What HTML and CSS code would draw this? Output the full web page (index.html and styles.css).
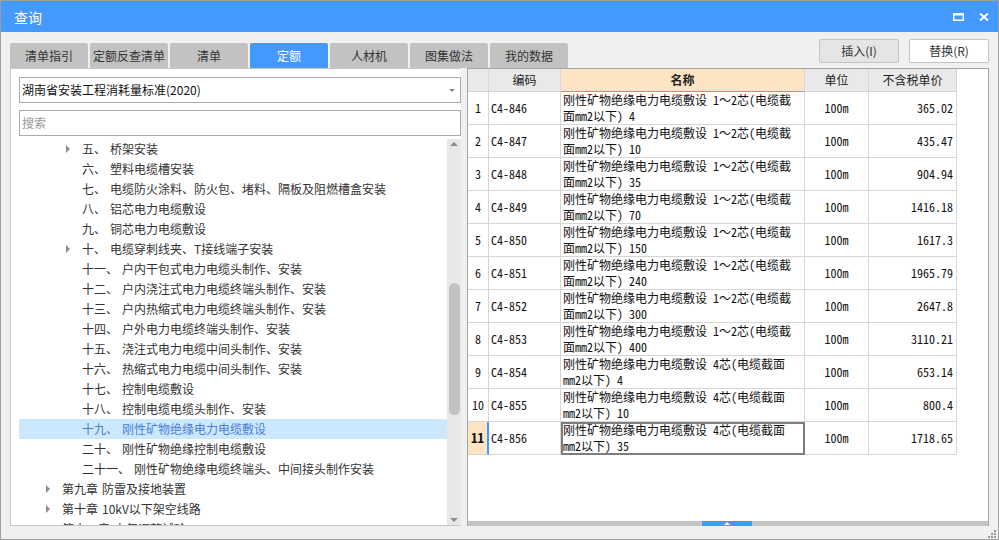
FILE: index.html
```html
<!DOCTYPE html>
<html lang="zh-CN">
<head>
<meta charset="utf-8">
<title>查询</title>
<link rel="stylesheet" href="styles.css">
</head>
<body>
<div class="window">
  <div class="titlebar">
    <span class="title">查询</span>
    <div class="win-ctrls">
      <svg class="ico" width="11" height="8" viewBox="0 0 11 8"><rect x="0.75" y="0.75" width="9.5" height="6.5" fill="none" stroke="#fff" stroke-width="1.5"/><rect x="0" y="0" width="11" height="2.5" fill="#fff"/></svg>
      <svg class="ico" width="10" height="8" viewBox="0 0 10 8"><path d="M1 0.5 L9 7.5 M9 0.5 L1 7.5" stroke="#fff" stroke-width="2" fill="none"/></svg>
    </div>
  </div>

  <div class="toolbar">
    <div class="tabs">
      <div class="tab">清单指引</div>
      <div class="tab">定额反查清单</div>
      <div class="tab">清单</div>
      <div class="tab active">定额</div>
      <div class="tab">人材机</div>
      <div class="tab">图集做法</div>
      <div class="tab">我的数据</div>
    </div>
    <div class="actions">
      <button class="btn gray">插入(I)</button>
      <button class="btn">替换(R)</button>
    </div>
  </div>

  <div class="content">
    <div class="left">
      <div class="select"><span>湖南省安装工程消耗量标准(2020)</span><span class="caret"></span></div>
      <div class="search">搜索</div>
      <div class="tree-wrap">
        <ul class="tree">
          <li class="l2"><span class="arrow"></span><span class="num">五、</span><span class="txt">桥架安装</span></li>
          <li class="l2"><span class="arrow none"></span><span class="num">六、</span><span class="txt">塑料电缆槽安装</span></li>
          <li class="l2"><span class="arrow none"></span><span class="num">七、</span><span class="txt">电缆防火涂料、防火包、堵料、隔板及阻燃槽盒安装</span></li>
          <li class="l2"><span class="arrow none"></span><span class="num">八、</span><span class="txt">铝芯电力电缆敷设</span></li>
          <li class="l2"><span class="arrow none"></span><span class="num">九、</span><span class="txt">铜芯电力电缆敷设</span></li>
          <li class="l2"><span class="arrow"></span><span class="num">十、</span><span class="txt">电缆穿刺线夹、T接线端子安装</span></li>
          <li class="l2"><span class="arrow none"></span><span class="num">十一、</span><span class="txt">户内干包式电力电缆头制作、安装</span></li>
          <li class="l2"><span class="arrow none"></span><span class="num">十二、</span><span class="txt">户内浇注式电力电缆终端头制作、安装</span></li>
          <li class="l2"><span class="arrow none"></span><span class="num">十三、</span><span class="txt">户内热缩式电力电缆终端头制作、安装</span></li>
          <li class="l2"><span class="arrow none"></span><span class="num">十四、</span><span class="txt">户外电力电缆终端头制作、安装</span></li>
          <li class="l2"><span class="arrow none"></span><span class="num">十五、</span><span class="txt">浇注式电力电缆中间头制作、安装</span></li>
          <li class="l2"><span class="arrow none"></span><span class="num">十六、</span><span class="txt">热缩式电力电缆中间头制作、安装</span></li>
          <li class="l2"><span class="arrow none"></span><span class="num">十七、</span><span class="txt">控制电缆敷设</span></li>
          <li class="l2"><span class="arrow none"></span><span class="num">十八、</span><span class="txt">控制电缆电缆头制作、安装</span></li>
          <li class="l2 selected"><span class="arrow none"></span><span class="num">十九、</span><span class="txt">刚性矿物绝缘电力电缆敷设</span></li>
          <li class="l2"><span class="arrow none"></span><span class="num">二十、</span><span class="txt">刚性矿物绝缘控制电缆敷设</span></li>
          <li class="l2"><span class="arrow none"></span><span class="num">二十一、</span><span class="txt">刚性矿物绝缘电缆终端头、中间接头制作安装</span></li>
          <li class="l1"><span class="arrow"></span><span class="num">第九章</span><span class="txt">防雷及接地装置</span></li>
          <li class="l1"><span class="arrow"></span><span class="num">第十章</span><span class="txt">10kV以下架空线路</span></li>
          <li class="l1"><span class="arrow"></span><span class="num">第十一章</span><span class="txt">电气调整试验</span></li>
        </ul>
        <div class="vscroll">
          <span class="sb-up"></span>
          <div class="sb-thumb"></div>
          <span class="sb-down"></span>
        </div>
      </div>
    </div>

    <div class="right">
      <div class="grid">
        <div class="row head">
          <div></div>
          <div class="c">编码</div>
          <div class="c sel-col">名称</div>
          <div class="c">单位</div>
          <div class="c">不含税单价</div>
        </div>
        <div class="row"><div class="rn">1</div><div class="code">C4-846</div><div class="name">刚性矿物绝缘电力电缆敷设 1～2芯(电缆截<br>面mm2以下) 4</div><div class="unit">100m</div><div class="price">365.02</div></div>
        <div class="row"><div class="rn">2</div><div class="code">C4-847</div><div class="name">刚性矿物绝缘电力电缆敷设 1～2芯(电缆截<br>面mm2以下) 10</div><div class="unit">100m</div><div class="price">435.47</div></div>
        <div class="row"><div class="rn">3</div><div class="code">C4-848</div><div class="name">刚性矿物绝缘电力电缆敷设 1～2芯(电缆截<br>面mm2以下) 35</div><div class="unit">100m</div><div class="price">904.94</div></div>
        <div class="row"><div class="rn">4</div><div class="code">C4-849</div><div class="name">刚性矿物绝缘电力电缆敷设 1～2芯(电缆截<br>面mm2以下) 70</div><div class="unit">100m</div><div class="price">1416.18</div></div>
        <div class="row"><div class="rn">5</div><div class="code">C4-850</div><div class="name">刚性矿物绝缘电力电缆敷设 1～2芯(电缆截<br>面mm2以下) 150</div><div class="unit">100m</div><div class="price">1617.3</div></div>
        <div class="row"><div class="rn">6</div><div class="code">C4-851</div><div class="name">刚性矿物绝缘电力电缆敷设 1～2芯(电缆截<br>面mm2以下) 240</div><div class="unit">100m</div><div class="price">1965.79</div></div>
        <div class="row"><div class="rn">7</div><div class="code">C4-852</div><div class="name">刚性矿物绝缘电力电缆敷设 1～2芯(电缆截<br>面mm2以下) 300</div><div class="unit">100m</div><div class="price">2647.8</div></div>
        <div class="row"><div class="rn">8</div><div class="code">C4-853</div><div class="name">刚性矿物绝缘电力电缆敷设 1～2芯(电缆截<br>面mm2以下) 400</div><div class="unit">100m</div><div class="price">3110.21</div></div>
        <div class="row"><div class="rn">9</div><div class="code">C4-854</div><div class="name">刚性矿物绝缘电力电缆敷设 4芯(电缆截面<br>mm2以下) 4</div><div class="unit">100m</div><div class="price">653.14</div></div>
        <div class="row"><div class="rn">10</div><div class="code">C4-855</div><div class="name">刚性矿物绝缘电力电缆敷设 4芯(电缆截面<br>mm2以下) 10</div><div class="unit">100m</div><div class="price">800.4</div></div>
        <div class="row current"><div class="rn">11</div><div class="code">C4-856</div><div class="name focus">刚性矿物绝缘电力电缆敷设 4芯(电缆截面<br>mm2以下) 35</div><div class="unit">100m</div><div class="price">1718.65</div></div>
      </div>
      <div class="hbar"><span class="collapse"></span></div>
    </div>
  </div>

  <div class="statusbar">
    <svg class="grip" width="10" height="9" viewBox="0 0 10 9">
      <rect x="8" y="1" width="2" height="2" fill="#9a9a9a"/>
      <rect x="5" y="4" width="2" height="2" fill="#9a9a9a"/>
      <rect x="8" y="4" width="2" height="2" fill="#9a9a9a"/>
      <rect x="2" y="7" width="2" height="2" fill="#9a9a9a"/>
      <rect x="5" y="7" width="2" height="2" fill="#9a9a9a"/>
      <rect x="8" y="7" width="2" height="2" fill="#9a9a9a"/>
    </svg>
  </div>
</div>
</body>
</html>
```

FILE: styles.css
```css
* { box-sizing: border-box; margin: 0; padding: 0; }
html, body { width: 999px; height: 540px; overflow: hidden; }
body {
  font-family: "Noto Sans CJK SC", "Microsoft YaHei", sans-serif;
  font-size: 12px;
  color: #333;
  background: #f0f0f0;
}
ul { list-style: none; }

.window {
  width: 999px;
  height: 540px;
  border: 1px solid #9e9e9e;
  background: #f0f0f0;
  display: flex;
  flex-direction: column;
}

/* title bar */
.titlebar {
  height: 31px;
  flex: none;
  background: #4499ff;
  display: flex;
  align-items: center;
  padding: 0 9px 0 13px;
  color: #fff;
}
.title { font-size: 14px; line-height: 16px; }
.win-ctrls { margin-left: auto; display: flex; align-items: center; gap: 15px; }
.ico { display: block; }

/* toolbar */
.toolbar {
  height: 36px;
  flex: none;
  display: flex;
  padding: 0 9px;
}
.tabs { display: flex; gap: 2px; align-self: flex-end; }
.tab {
  width: 78px;
  height: 25px;
  background: #c2c2c2;
  border-radius: 2px 2px 0 0;
  display: flex;
  align-items: center;
  justify-content: center;
  color: #333;
  line-height: 16px;
}
.tab.active { background: #4499ff; color: #fff; }
.actions { margin-left: auto; display: flex; gap: 10px; padding-top: 7px; }
.btn {
  width: 80px;
  height: 24px;
  border: 1px solid #c4c4c4;
  border-radius: 2px;
  background: #fff;
  font: inherit;
  color: #333;
  line-height: 16px;
}
.btn.gray { background: #e5e5e5; }

/* content */
.content {
  height: 458px;
  flex: none;
  display: flex;
  gap: 6px;
  padding: 0 9px;
}

.left {
  width: 451px;
  flex: none;
  background: #fff;
  border: 1px solid #c6c6c6;
  border-right: 0;
  display: flex;
  flex-direction: column;
  padding-top: 8px;
  overflow: hidden;
}
.select, .search {
  margin-left: 8px;
  height: 26px;
  flex: none;
  border: 1px solid #ababab;
  display: flex;
  align-items: center;
  padding-left: 2px;
  line-height: 16px;
}
.select { color: #111; }
.caret {
  margin-left: auto;
  margin-right: 5px;
  width: 0;
  height: 0;
  border-left: 3px solid transparent;
  border-right: 3px solid transparent;
  border-top: 3px solid #8a8a8a;
}
.search { margin-top: 7px; color: #9a9a9a; }

.tree-wrap {
  margin-top: 3px;
  flex: 1;
  display: flex;
  overflow: hidden;
}
.tree { flex: 1; padding-left: 8px; overflow: hidden; }
.tree li {
  height: 20px;
  display: flex;
  align-items: center;
  white-space: nowrap;
  line-height: 16px;
  color: #333;
}
.tree li.l2 { padding-left: 47px; }
.tree li.l1 { padding-left: 27px; }
.tree li.selected { background: #cce8ff; color: #4a7fd6; }
.arrow {
  width: 16px;
  height: 20px;
  flex: none;
  display: flex;
  align-items: center;
}
.arrow::before {
  content: "";
  width: 0;
  height: 0;
  border-left: 4px solid #8c8c8c;
  border-top: 4px solid transparent;
  border-bottom: 4px solid transparent;
}
.arrow.none::before { display: none; }
.txt { margin-left: 4px; }

.vscroll {
  width: 14px;
  flex: none;
  background: #e8e8e8;
  display: flex;
  flex-direction: column;
  align-items: center;
}
.sb-up, .sb-down {
  width: 0;
  height: 0;
  border-left: 4px solid transparent;
  border-right: 4px solid transparent;
}
.sb-up { margin-top: 3px; border-bottom: 4px solid #8a8a8a; }
.sb-down { margin-top: auto; margin-bottom: 3px; border-top: 4px solid #8a8a8a; }
.sb-thumb {
  margin-top: 137px;
  width: 11px;
  height: 132px;
  border-radius: 6px;
  background: #c2c2c2;
}

/* right grid */
.right {
  width: 522px;
  flex: none;
  background: #fff;
  border: 1px solid #a4a4a4;
  border-bottom: 0;
  display: flex;
  flex-direction: column;
}
.grid {
  flex: 1;
  font-family: "Noto Sans Mono CJK SC", "Noto Sans CJK SC", monospace;
  color: #111;
  overflow: hidden;
}
.row {
  display: grid;
  grid-template-columns: 21px 72px 244px 64px 88px;
  width: 489px;
  height: 33px;
}
.row > div {
  border-right: 1px solid #d6d6d6;
  border-bottom: 1px solid #d6d6d6;
  display: flex;
  align-items: center;
  line-height: 16px;
  white-space: nowrap;
}
.row.head { height: 23px; }
.row.head > div {
  background: #e9e9e9;
  justify-content: center;
  font-family: "Noto Sans CJK SC", sans-serif;
  color: #222;
}
.row.head > div.sel-col {
  background: #fde4c3;
  font-weight: bold;
  border-bottom-color: #6aa9f2;
}
.rn { justify-content: center; }
.code { padding-left: 2px; }
.row > .name { align-items: flex-start; padding: 0 0 0 2px; }
.unit { justify-content: center; }
.price { justify-content: flex-end; padding-right: 3px; }
.row.current .rn {
  background: #fde4c3;
  font-weight: bold;
  font-size: 13px;
  border-right: 2px solid #4499ff;
}
.name.focus { outline: 2px solid #7e7e7e; outline-offset: -2px; }

.hbar {
  height: 5px;
  flex: none;
  background: #c4c4c4;
  display: flex;
}
.collapse {
  margin-left: 234px;
  width: 50px;
  height: 5px;
  background: #4499ff;
  display: flex;
  justify-content: center;
  align-items: center;
}
.collapse::before {
  content: "";
  width: 0;
  height: 0;
  border-left: 3px solid transparent;
  border-right: 3px solid transparent;
  border-bottom: 3px solid #fff;
}

.statusbar {
  flex: 1;
  display: flex;
  justify-content: flex-end;
  align-items: flex-end;
  padding: 0 2px 1px 0;
}
.grip { display: block; }
```
